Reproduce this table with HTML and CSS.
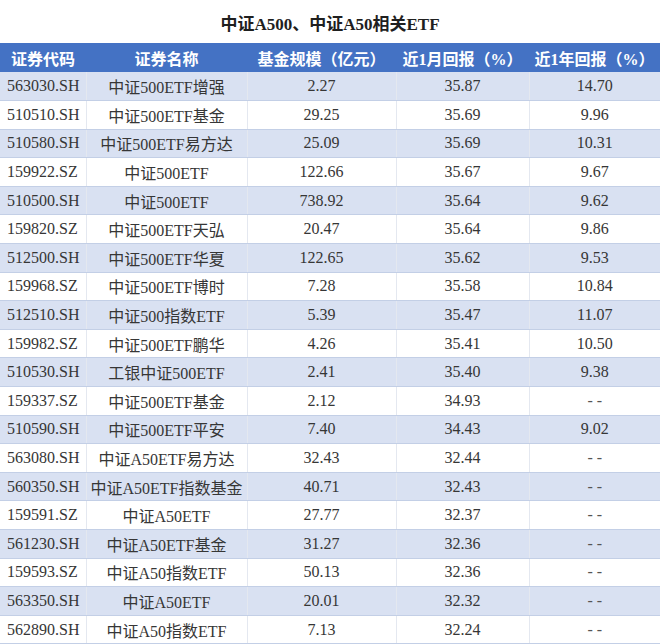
FILE: index.html
```html
<!DOCTYPE html>
<html lang="zh-CN">
<head>
<meta charset="utf-8">
<title>中证A500、中证A50相关ETF</title>
<link rel="stylesheet" href="styles.css">
</head>
<body>
<div class="sheet">
  <div class="title">中证A500、中证A50相关ETF</div>
  <table class="grid">
    <colgroup>
      <col class="c1"><col class="c2"><col class="c3"><col class="c4"><col class="c5">
    </colgroup>
    <thead>
      <tr><th>证券代码</th><th>证券名称</th><th>基金规模（亿元）</th><th>近1月回报（%）</th><th>近1年回报（%）</th></tr>
    </thead>
    <tbody>
      <tr><td class="code">563030.SH</td><td>中证500ETF增强</td><td>2.27</td><td>35.87</td><td>14.70</td></tr>
      <tr><td class="code">510510.SH</td><td>中证500ETF基金</td><td>29.25</td><td>35.69</td><td>9.96</td></tr>
      <tr><td class="code">510580.SH</td><td>中证500ETF易方达</td><td>25.09</td><td>35.69</td><td>10.31</td></tr>
      <tr><td class="code">159922.SZ</td><td>中证500ETF</td><td>122.66</td><td>35.67</td><td>9.67</td></tr>
      <tr><td class="code">510500.SH</td><td>中证500ETF</td><td>738.92</td><td>35.64</td><td>9.62</td></tr>
      <tr><td class="code">159820.SZ</td><td>中证500ETF天弘</td><td>20.47</td><td>35.64</td><td>9.86</td></tr>
      <tr><td class="code">512500.SH</td><td>中证500ETF华夏</td><td>122.65</td><td>35.62</td><td>9.53</td></tr>
      <tr><td class="code">159968.SZ</td><td>中证500ETF博时</td><td>7.28</td><td>35.58</td><td>10.84</td></tr>
      <tr><td class="code">512510.SH</td><td>中证500指数ETF</td><td>5.39</td><td>35.47</td><td>11.07</td></tr>
      <tr><td class="code">159982.SZ</td><td>中证500ETF鹏华</td><td>4.26</td><td>35.41</td><td>10.50</td></tr>
      <tr><td class="code">510530.SH</td><td>工银中证500ETF</td><td>2.41</td><td>35.40</td><td>9.38</td></tr>
      <tr><td class="code">159337.SZ</td><td>中证500ETF基金</td><td>2.12</td><td>34.93</td><td><span class="nil">--</span></td></tr>
      <tr><td class="code">510590.SH</td><td>中证500ETF平安</td><td>7.40</td><td>34.43</td><td>9.02</td></tr>
      <tr><td class="code">563080.SH</td><td>中证A50ETF易方达</td><td>32.43</td><td>32.44</td><td><span class="nil">--</span></td></tr>
      <tr><td class="code">560350.SH</td><td>中证A50ETF指数基金</td><td>40.71</td><td>32.43</td><td><span class="nil">--</span></td></tr>
      <tr><td class="code">159591.SZ</td><td>中证A50ETF</td><td>27.77</td><td>32.37</td><td><span class="nil">--</span></td></tr>
      <tr><td class="code">561230.SH</td><td>中证A50ETF基金</td><td>31.27</td><td>32.36</td><td><span class="nil">--</span></td></tr>
      <tr><td class="code">159593.SZ</td><td>中证A50指数ETF</td><td>50.13</td><td>32.36</td><td><span class="nil">--</span></td></tr>
      <tr><td class="code">563350.SH</td><td>中证A50ETF</td><td>20.01</td><td>32.32</td><td><span class="nil">--</span></td></tr>
      <tr><td class="code">562890.SH</td><td>中证A50指数ETF</td><td>7.13</td><td>32.24</td><td><span class="nil">--</span></td></tr>
    </tbody>
  </table>
</div>
</body>
</html>
```

FILE: styles.css
```css
html, body {
  margin: 0;
  padding: 0;
  background: #ffffff;
}

.sheet {
  width: 660px;
  font-family: "Liberation Serif", "Noto Sans CJK SC", serif;
  color: #363636;
}

.title {
  height: 43px;
  display: flex;
  align-items: center;
  justify-content: center;
  font-size: 17px;
  font-weight: 700;
  color: #1f1f1f;
  box-sizing: border-box;
  padding-top: 1px;
}

.grid {
  width: 660px;
  border-collapse: collapse;
  table-layout: fixed;
  font-size: 16px;
}

.c1 { width: 86px; }
.c2 { width: 161px; }
.c3 { width: 149px; }
.c4 { width: 133px; }
.c5 { width: 131px; }

.grid th {
  height: 29px;
  padding: 0;
  background: #4472c4;
  color: #ffffff;
  font-weight: 700;
  text-align: center;
  white-space: nowrap;
}

.grid td {
  height: 28.6px;
  padding: 0;
  box-sizing: border-box;
  text-align: center;
  white-space: nowrap;
  border-bottom: 1px solid #c3cfe6;
  border-right: 1px solid #e4e8f0;
}

.grid td:last-child {
  border-right: none;
}

.grid tbody tr:nth-child(odd) td {
  background: #d9e1f2;
}

.grid td.code {
  text-align: left;
  padding-left: 7px;
}

.nil {
  letter-spacing: 4px;
  padding-left: 4px;
  color: #555555;
}
```
